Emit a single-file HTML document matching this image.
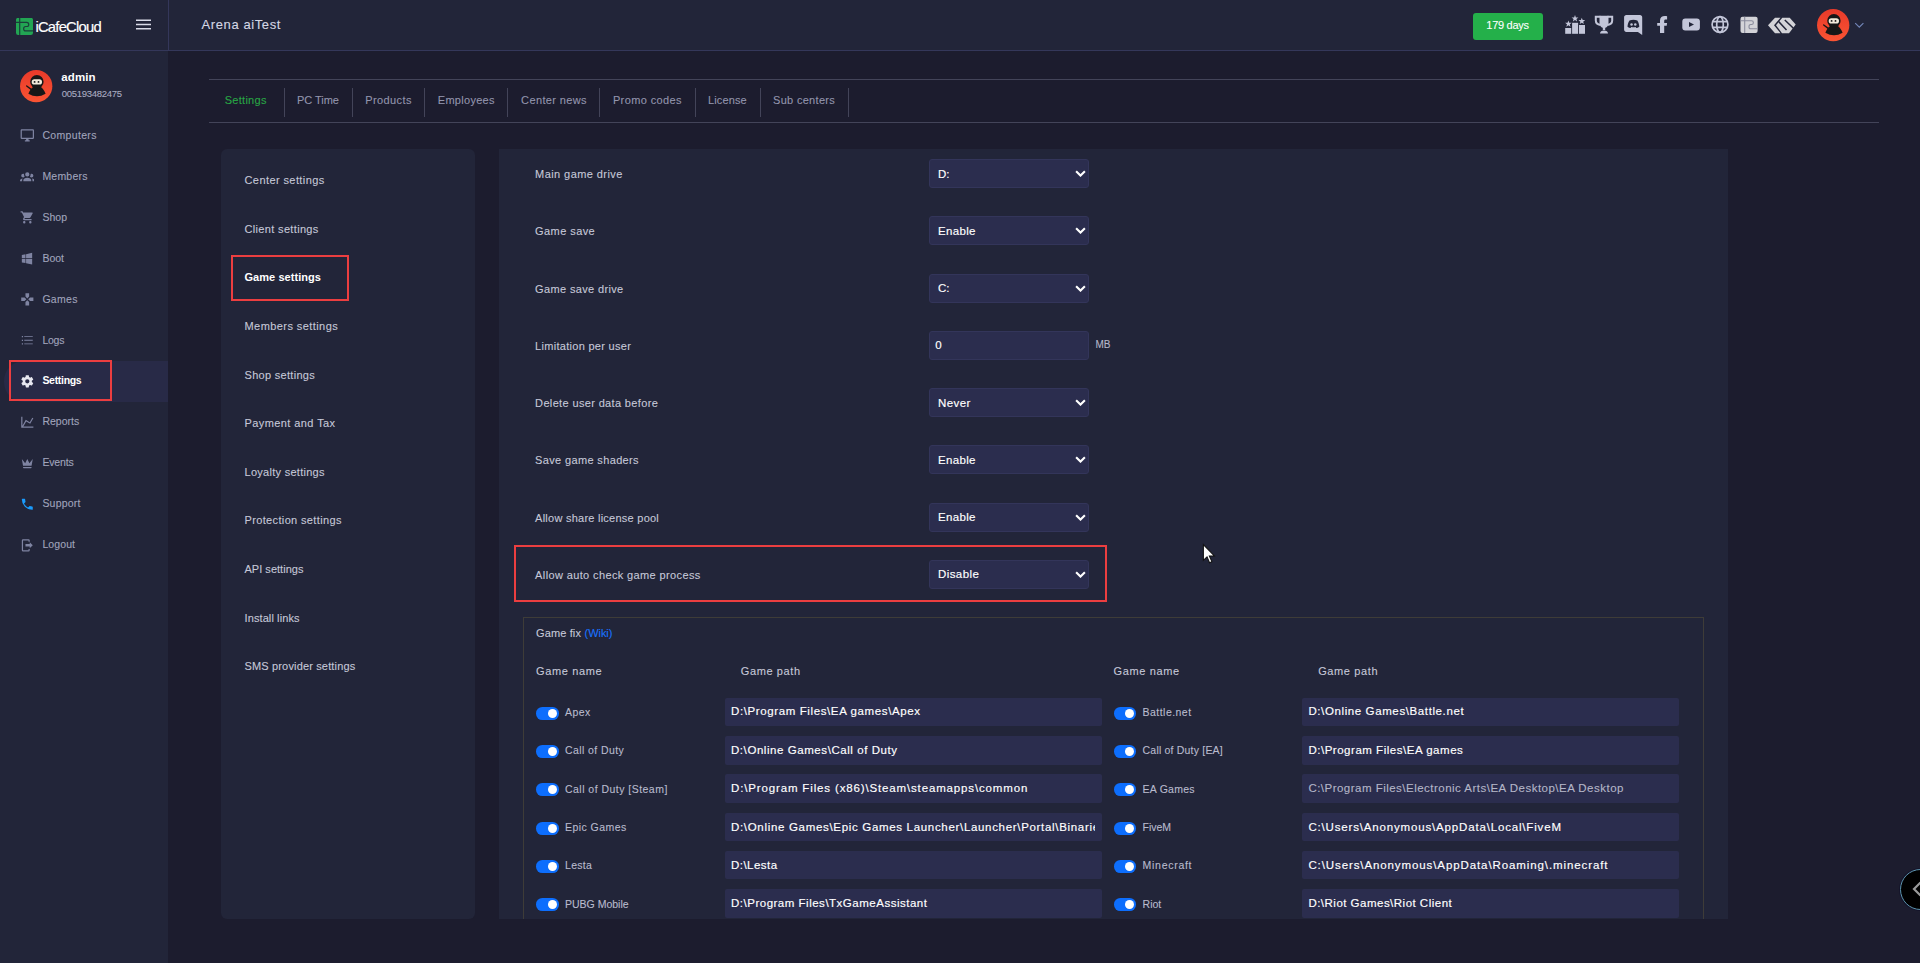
<!DOCTYPE html>
<html lang="en">
<head>
<meta charset="utf-8">
<title>iCafeCloud - Game settings</title>
<style>
*{box-sizing:border-box;margin:0;padding:0}
html,body{width:1920px;height:963px;overflow:hidden;background:#1c1c2e;font-family:"Liberation Sans",sans-serif;color:#c3c5d6;font-size:11px}
.abs{position:absolute}
.t{position:absolute;line-height:14px;white-space:pre;-webkit-text-stroke:0.1px currentColor}
.t.clip{overflow:hidden}
#topbar{position:absolute;left:0;top:0;width:1920px;height:51px;background:#222539;border-bottom:1px solid #34375a}
#topbar .vline{position:absolute;left:168px;top:0;width:1px;height:50px;background:#34375a}
#sidebar{position:absolute;left:0;top:51px;width:168px;height:912px;background:#222539}
.days{position:absolute;left:1473px;top:13px;width:70px;height:27px;background:#24b04a;border-radius:3px}
.ni{position:absolute;left:19.5px;width:14.6px;height:14.6px;fill:#7f84a2}
.ni.on{fill:#e6e7f0}
.navact{position:absolute;left:4px;width:164px;height:41px;background:#282a47;border-radius:20px 0 0 20px}
.redbox{position:absolute;border:2px solid #ec3e40}
.hline{position:absolute;left:209px;width:1670px;height:1px;background:#434459}
.vsep{position:absolute;top:87.5px;width:1px;height:29px;background:#434459}
.card{position:absolute;background:#222539;border-radius:6px}
.sel{position:absolute;left:929px;width:160px;height:29px;background:#2b2d4e;border:1px solid #33355a;border-radius:3px}
.fieldset{position:absolute;left:523px;top:617px;width:1181px;height:320px;border:1px solid #3e3c38}
.tg{position:absolute;width:23px;height:12.6px;border-radius:6.3px;background:#0d6efd}
.tg:after{content:"";position:absolute;right:2px;top:1.8px;width:9px;height:9px;border-radius:50%;background:#fff}
.gp{position:absolute;width:377px;height:28px;background:#2b2d4e;border-radius:2px}
.mask{position:absolute;left:480px;top:919px;width:1300px;height:44px;background:#1c1c2e}
.fab{position:absolute;left:1899.5px;top:868.5px;width:41px;height:41px;border-radius:50%;background:#000;border:1.2px solid #5c93ad;box-shadow:0 0 0 1px #14142a}
.fab svg{position:absolute;left:11.5px;top:11.3px}
.w{-webkit-text-stroke:0.16px currentColor}
</style>
</head>
<body>
<aside>
<div id="sidebar"></div>
<svg class="abs" style="left:20px;top:70px" width="33" height="33" viewBox="0 0 33 33"><defs><linearGradient id="avg1" x1="0" y1="0" x2="0" y2="1"><stop offset="0" stop-color="#e83a2a"/><stop offset="1" stop-color="#fa5433"/></linearGradient></defs><circle cx="16.200" cy="16.200" r="16.150" fill="url(#avg1)"/><path d="M13.800 16.500C11.500 18 9.500 20.500 8.400 23.700Q17 28.800 25.600 23.700C24.400 20.500 22.500 18 20.200 16.500Z" fill="#171717"/><circle cx="16.900" cy="11.700" r="6.700" fill="#171717"/><rect x="11.700" y="9.300" width="10.300" height="5.300" rx="2.650" fill="#f3ebdc"/><circle cx="14.600" cy="11.900" r=".95" fill="#171717"/><circle cx="18.500" cy="11.900" r=".95" fill="#171717"/><path d="M6.700 16l4.800 3.600" stroke="#171717" stroke-width="1.400" stroke-linecap="round"/></svg>
<div class="t" style="left:61.3px;top:70px;font-size:11.5px;letter-spacing:0.089px;font-weight:700;-webkit-text-stroke:0;color:#fff">admin</div>
<div class="t" style="left:61.7px;top:87px;font-size:9.5px;letter-spacing:-0.274px;color:#a9abc0">005193482475</div>
<svg class="ni " style="top:128.2px" viewBox="0 0 24 24"><path d="M21,16H3V4H21M21,2H3C1.890,2 1,2.890 1,4V16A2,2 0 0,0 3,18H10V20H8V22H16V20H14V18H21A2,2 0 0,0 23,16V4C23,2.890 22.100,2 21,2Z"/></svg>
<div class="t" style="left:42.4px;top:128px;font-size:10.5px;letter-spacing:0.331px;color:#a0a4bc">Computers</div>
<svg class="ni " style="top:169.2px" viewBox="0 0 24 24"><path d="M12,5.500A3.500,3.500 0 0,1 15.500,9A3.500,3.500 0 0,1 12,12.500A3.500,3.500 0 0,1 8.500,9A3.500,3.500 0 0,1 12,5.500M5,8C5.560,8 6.080,8.150 6.530,8.420C6.380,9.850 6.800,11.270 7.660,12.380C7.160,13.340 6.160,14 5,14A3,3 0 0,1 2,11A3,3 0 0,1 5,8M19,8A3,3 0 0,1 22,11A3,3 0 0,1 19,14C17.840,14 16.840,13.340 16.340,12.380C17.200,11.270 17.620,9.850 17.470,8.420C17.920,8.150 18.440,8 19,8M5.500,18.250C5.500,16.180 8.410,14.500 12,14.500C15.590,14.500 18.500,16.180 18.500,18.250V20H5.500V18.250M0,20V18.500C0,17.110 1.890,15.940 4.450,15.600C3.860,16.280 3.500,17.220 3.500,18.250V20H0M24,20H20.500V18.250C20.500,17.220 20.140,16.280 19.550,15.600C22.110,15.940 24,17.110 24,18.500V20Z"/></svg>
<div class="t" style="left:42.4px;top:169px;font-size:10.5px;letter-spacing:0.207px;color:#a0a4bc">Members</div>
<svg class="ni " style="top:210.2px" viewBox="0 0 24 24"><path d="M17,18C15.890,18 15,18.890 15,20A2,2 0 0,0 17,22A2,2 0 0,0 19,20C19,18.890 18.100,18 17,18M1,2V4H3L6.600,11.590L5.240,14.040C5.090,14.320 5,14.650 5,15A2,2 0 0,0 7,17H19V15H7.420A0.250,0.250 0 0,1 7.170,14.750C7.170,14.700 7.180,14.660 7.200,14.630L8.100,13H15.550C16.300,13 16.960,12.580 17.300,11.970L20.880,5.500C20.950,5.340 21,5.170 21,5A1,1 0 0,0 20,4H5.210L4.270,2M7,18C5.890,18 5,18.890 5,20A2,2 0 0,0 7,22A2,2 0 0,0 9,20C9,18.890 8.100,18 7,18Z"/></svg>
<div class="t" style="left:42.4px;top:210px;font-size:10.5px;letter-spacing:0.026px;color:#a0a4bc">Shop</div>
<svg class="ni " style="top:251.2px" viewBox="0 0 24 24"><path d="M3,12V6.750L9,5.430V11.910L3,12M20,3V11.750L10,11.900V5.210L20,3M3,13L9,13.090V19.900L3,18.750V13M20,13.250V22L10,20.090V13.100L20,13.250Z"/></svg>
<div class="t" style="left:42.4px;top:251px;font-size:10.5px;letter-spacing:0.0px;color:#a0a4bc">Boot</div>
<svg class="ni " style="top:292.2px" viewBox="0 0 24 24"><path d="M16.500,9L13.500,12L16.500,15H22V9M9,16.500V22H15V16.500L12,13.500M7.500,9H2V15H7.500L10.500,12M15,7.500V2H9V7.500L12,10.500L15,7.500Z"/></svg>
<div class="t" style="left:42.4px;top:292px;font-size:10.5px;letter-spacing:0.317px;color:#a0a4bc">Games</div>
<svg class="ni " style="top:333.2px" viewBox="0 0 24 24"><path d="M7,5.300H21V6.700H7V5.300M7,12.700V11.300H21V12.700H7M3,5H5V7H3V5M3,11H5V13H3V11M7,18.700V17.300H21V18.700H7M3,17H5V19H3V17Z"/></svg>
<div class="t" style="left:42.4px;top:333px;font-size:10.5px;letter-spacing:-0.224px;color:#a0a4bc">Logs</div>
<div class="navact" style="top:361px"></div>
<svg class="ni on" style="top:373.7px" viewBox="0 0 24 24"><path d="M12,15.500A3.500,3.500 0 0,1 8.500,12A3.500,3.500 0 0,1 12,8.500A3.500,3.500 0 0,1 15.500,12A3.500,3.500 0 0,1 12,15.500M19.430,12.970C19.470,12.650 19.500,12.330 19.500,12C19.500,11.670 19.470,11.340 19.430,11L21.540,9.370C21.730,9.220 21.780,8.950 21.660,8.730L19.660,5.270C19.540,5.050 19.270,4.960 19.050,5.050L16.560,6.050C16.040,5.660 15.500,5.320 14.870,5.070L14.500,2.420C14.460,2.180 14.250,2 14,2H10C9.750,2 9.540,2.180 9.500,2.420L9.130,5.070C8.500,5.320 7.960,5.660 7.440,6.050L4.950,5.050C4.730,4.960 4.460,5.050 4.340,5.270L2.340,8.730C2.210,8.950 2.270,9.220 2.460,9.370L4.570,11C4.530,11.340 4.500,11.670 4.500,12C4.500,12.330 4.530,12.650 4.570,12.970L2.460,14.630C2.270,14.780 2.210,15.050 2.340,15.270L4.340,18.730C4.460,18.950 4.730,19.030 4.950,18.950L7.440,17.940C7.960,18.340 8.500,18.680 9.130,18.930L9.500,21.580C9.540,21.820 9.750,22 10,22H14C14.250,22 14.460,21.820 14.500,21.580L14.870,18.930C15.500,18.670 16.040,18.340 16.560,17.940L19.050,18.950C19.270,19.030 19.540,18.950 19.660,18.730L21.660,15.270C21.780,15.050 21.730,14.780 21.540,14.630L19.430,12.970Z"/></svg>
<div class="t" style="left:42.4px;top:373px;font-size:10.5px;letter-spacing:-0.302px;font-weight:700;-webkit-text-stroke:0;color:#fff">Settings</div>
<svg class="ni " style="top:414.7px" viewBox="0 0 24 24"><path d="M16,11.780L20.240,4.450L21.970,5.450L16.740,14.500L10.230,10.750L5.460,19H22V21H2V3H4V17.540L9.500,8L16,11.780Z"/></svg>
<div class="t" style="left:42.4px;top:414px;font-size:10.5px;letter-spacing:0.007px;color:#a0a4bc">Reports</div>
<svg class="ni " style="top:455.7px" viewBox="0 0 24 24"><path d="M5,16L3,5L8.500,12L12,5L15.500,12L21,5L19,16H5M19,19A1,1 0 0,1 18,20H6A1,1 0 0,1 5,19V18H19V19Z"/></svg>
<div class="t" style="left:42.4px;top:455px;font-size:10.5px;letter-spacing:-0.16px;color:#a0a4bc">Events</div>
<svg class="ni " style="top:496.7px;fill:#1a9bfc" viewBox="0 0 24 24"><path d="M6.620,10.790C8.060,13.620 10.380,15.940 13.210,17.380L15.410,15.180C15.690,14.900 16.080,14.820 16.430,14.930C17.550,15.300 18.750,15.500 20,15.500A1,1 0 0,1 21,16.500V20A1,1 0 0,1 20,21A17,17 0 0,1 3,4A1,1 0 0,1 4,3H7.500A1,1 0 0,1 8.500,4C8.500,5.250 8.700,6.450 9.070,7.570C9.180,7.920 9.100,8.310 8.820,8.590L6.620,10.790Z"/></svg>
<div class="t" style="left:42.4px;top:496px;font-size:10.5px;letter-spacing:0.205px;color:#a0a4bc">Support</div>
<svg class="ni " style="top:537.7px" viewBox="0 0 24 24"><path d="M16,17V14H9V10H16V7L21,12L16,17M14,2A2,2 0 0,1 16,4V6H14V4H5V20H14V18H16V20A2,2 0 0,1 14,22H5A2,2 0 0,1 3,20V4A2,2 0 0,1 5,2H14Z"/></svg>
<div class="t" style="left:42.4px;top:537px;font-size:10.5px;letter-spacing:0.097px;color:#a0a4bc">Logout</div>
<div class="redbox" style="left:9px;top:360px;width:103px;height:41px"></div>
</aside>
<header id="topbar">
<div class="vline"></div>
<svg class="abs" style="left:16px;top:18px" width="17" height="17" viewBox="0 0 17 17"><rect x="0" y="-0.200" width="17" height="17.200" rx="2.200" fill="#22a553"/><path d="M3.700 0V17M0 4.300H10.800c2.600 0 2.600 4.200 0 4.200H9.600c-2.600 0-2.600 4.400 0 4.400H17" fill="none" stroke="#1b3f3a" stroke-width="1.200"/></svg>
<div class="t w" style="left:35.4px;top:20px;font-size:14.8px;letter-spacing:-0.769px;color:#fff">iCafeCloud</div>
<svg class="abs" style="left:136px;top:19px" width="15" height="11" viewBox="0 0 15 11"><path d="M0 1.200h15M0 5.500h15M0 9.800h15" stroke="#d9dbe8" stroke-width="1.500"/></svg>
<div class="t" style="left:201.6px;top:18px;font-size:13px;letter-spacing:0.59px;color:#d5d7e4">Arena aiTest</div>
<div class="days"></div>
<div class="t" style="left:1486.3px;top:18px;font-size:11px;letter-spacing:-0.277px;color:#fff">179 days</div>
<svg class="abs" style="left:1560px;top:10px" width="30" height="30" viewBox="1560 10 30 30" fill="#c3c6d9"><rect x="1565.200" y="28" width="6" height="5.800"/><rect x="1572.100" y="22.800" width="6" height="11"/><rect x="1579" y="25" width="6" height="8.800"/><polygon points="1568.40,20.40 1569.26,22.71 1571.73,22.82 1569.80,24.35 1570.46,26.73 1568.40,25.37 1566.34,26.73 1567.00,24.35 1565.07,22.82 1567.54,22.71"/><polygon points="1575.00,15.00 1575.89,17.38 1578.42,17.49 1576.44,19.07 1577.12,21.51 1575.00,20.11 1572.88,21.51 1573.56,19.07 1571.58,17.49 1574.11,17.38"/><polygon points="1581.80,17.70 1582.66,20.01 1585.13,20.12 1583.20,21.65 1583.86,24.03 1581.80,22.67 1579.74,24.03 1580.40,21.65 1578.47,20.12 1580.94,20.01"/></svg>
<svg class="abs" style="left:1590px;top:10px" width="30" height="30" viewBox="1590 10 30 30" fill="#c3c6d9"><path d="M1599.500 15.800h9v7.200c0 2.800-1.900 5-4.500 5s-4.500-2.200-4.500-5z"/><path d="M1600.500 16.800H1595.800v3.800c0 2.400 1.900 4 4.700 4.400M1607.500 16.800h4.700v3.800c0 2.400-1.900 4-4.700 4.400" fill="none" stroke="#c3c6d9" stroke-width="2"/><path d="M1602.800 27h2.400v3h-2.400z"/><path d="M1600 33.500c0-1.800 1.600-3 4-3s4 1.200 4 3z"/></svg>
<svg class="abs" style="left:1620px;top:10px" width="30" height="30" viewBox="1620 10 30 30"><path d="M1626.300 15h13.700c1.200 0 2.200 1 2.200 2.200V35l-4.300-3h-11.600c-1.200 0-2.200-1-2.200-2.200V17.200c0-1.200 1-2.200 2.200-2.200z" fill="#c3c6d9"/><path d="M1629.500 20.600c1.200-.6 2.600-.9 3.900-.9s2.700.3 3.900.9c1.100 1.700 1.900 3.800 2 6.100-1 .8-2.100 1.200-3.100 1.300l-.6-1.100c-1.400.4-3 .4-4.400 0l-.6 1.100c-1-.1-2.100-.5-3.100-1.300.1-2.300.9-4.400 2-6.100z" fill="#222539"/><circle cx="1631.500" cy="24.500" r="1.250" fill="#c3c6d9"/><circle cx="1635.300" cy="24.500" r="1.250" fill="#c3c6d9"/></svg>
<svg class="abs" style="left:1650px;top:10px" width="30" height="30" viewBox="1650 10 30 30"><path d="M1664.200 33.100V25.800h2.500l.4-2.800h-2.900v-1.900c0-.9.300-1.600 1.500-1.600h1.400v-3.300c-.3 0-1.200-.2-2.300-.2-2.700 0-4.800 1.500-4.800 4.400v2.600h-2.800v2.800h2.800v7.300z" fill="#c3c6d9"/></svg>
<svg class="abs" style="left:1680px;top:10px" width="30" height="30" viewBox="1680 10 30 30"><rect x="1682.300" y="18.500" width="17.600" height="12" rx="3" fill="#c3c6d9"/><path d="M1689 22l5 2.500-5 2.500z" fill="#222539"/></svg>
<svg class="abs" style="left:1705px;top:10px" width="30" height="30" viewBox="1705 10 30 30" fill="none" stroke="#c3c6d9" stroke-width="1.700"><circle cx="1720" cy="24.550" r="7.900"/><ellipse cx="1720" cy="24.550" rx="3.300" ry="7.900"/><path d="M1712.800 21.700h14.400M1712.800 27.400h14.400"/></svg>
<svg class="abs" style="left:1735px;top:10px" width="30" height="30" viewBox="1735 10 30 30"><rect x="1740.500" y="16.700" width="17.100" height="16.300" rx="2" fill="#d3d3d8"/><path d="M1744.700 16.700V33M1740.500 20.800H1751.500c2.500 0 2.500 3.700 0 3.700h-0.800c-2.300 0-2.300 4.300 0 4.300h6.900" fill="none" stroke="#8a8c9d" stroke-width="1.100"/></svg>
<svg class="abs" style="left:1765px;top:10px" width="35" height="30" viewBox="1765 10 35 30"><polygon points="1768,25.200 1775,17.700 1780.500,17.700 1774,25.200 1780.500,33.200 1775,33.200" fill="#d3d3d8"/><polygon points="1776,25.200 1782.300,17.700 1789.700,17.700 1795.700,24.500 1789,33.200 1782,33.200" fill="#d3d3d8"/><path d="M1778.400 21.300L1786.500 29.900M1784.800 20L1793.400 28.200" stroke="#222539" stroke-width="1.500"/></svg>
<svg class="abs" style="left:1817px;top:9px" width="33" height="33" viewBox="0 0 33 33"><defs><linearGradient id="avg2" x1="0" y1="0" x2="0" y2="1"><stop offset="0" stop-color="#e83a2a"/><stop offset="1" stop-color="#fa5433"/></linearGradient></defs><circle cx="16.200" cy="16.200" r="16.150" fill="url(#avg2)"/><path d="M13.800 16.500C11.500 18 9.500 20.500 8.400 23.700Q17 28.800 25.600 23.700C24.400 20.500 22.500 18 20.200 16.500Z" fill="#171717"/><circle cx="16.900" cy="11.700" r="6.700" fill="#171717"/><rect x="11.700" y="9.300" width="10.300" height="5.300" rx="2.650" fill="#f3ebdc"/><circle cx="14.600" cy="11.900" r=".95" fill="#171717"/><circle cx="18.500" cy="11.900" r=".95" fill="#171717"/><path d="M6.700 16l4.800 3.600" stroke="#171717" stroke-width="1.400" stroke-linecap="round"/></svg>
<svg class="abs" style="left:1854px;top:21px" width="11" height="8" viewBox="0 0 11 8"><path d="M1.200 2.200L5.300 6.200l4.100-4" fill="none" stroke="#7386b8" stroke-width="1.150"/></svg>
</header>
<main>
<div class="hline" style="top:79px"></div>
<div class="hline" style="top:122px"></div>
<div class="t" style="left:224.7px;top:93px;font-size:11px;letter-spacing:0.281px;color:#28a745">Settings</div>
<div class="vsep" style="left:284px"></div>
<div class="t" style="left:297.1px;top:93px;font-size:11px;letter-spacing:-0.061px;color:#9395ad">PC Time</div>
<div class="vsep" style="left:352px"></div>
<div class="t" style="left:365.3px;top:93px;font-size:11px;letter-spacing:0.385px;color:#9395ad">Products</div>
<div class="vsep" style="left:424px"></div>
<div class="t" style="left:437.8px;top:93px;font-size:11px;letter-spacing:0.287px;color:#9395ad">Employees</div>
<div class="vsep" style="left:507px"></div>
<div class="t" style="left:521.1px;top:93px;font-size:11px;letter-spacing:0.375px;color:#9395ad">Center news</div>
<div class="vsep" style="left:599px"></div>
<div class="t" style="left:612.9px;top:93px;font-size:11px;letter-spacing:0.391px;color:#9395ad">Promo codes</div>
<div class="vsep" style="left:695px"></div>
<div class="t" style="left:708.1px;top:93px;font-size:11px;letter-spacing:0.1px;color:#9395ad">License</div>
<div class="vsep" style="left:760px"></div>
<div class="t" style="left:773.0px;top:93px;font-size:11px;letter-spacing:0.312px;color:#9395ad">Sub centers</div>
<div class="vsep" style="left:848px"></div>
<div class="card" style="left:221px;top:149px;width:254px;height:770px"></div>
<div class="t" style="left:244.5px;top:173px;font-size:11px;letter-spacing:0.41px;color:#c6c8d8">Center settings</div>
<div class="t" style="left:244.5px;top:222px;font-size:11px;letter-spacing:0.338px;color:#c6c8d8">Client settings</div>
<div class="t" style="left:244.5px;top:270px;font-size:11px;letter-spacing:0.051px;font-weight:700;-webkit-text-stroke:0;color:#fff">Game settings</div>
<div class="t" style="left:244.5px;top:319px;font-size:11px;letter-spacing:0.427px;color:#c6c8d8">Members settings</div>
<div class="t" style="left:244.5px;top:368px;font-size:11px;letter-spacing:0.297px;color:#c6c8d8">Shop settings</div>
<div class="t" style="left:244.5px;top:416px;font-size:11px;letter-spacing:0.416px;color:#c6c8d8">Payment and Tax</div>
<div class="t" style="left:244.5px;top:465px;font-size:11px;letter-spacing:0.279px;color:#c6c8d8">Loyalty settings</div>
<div class="t" style="left:244.5px;top:513px;font-size:11px;letter-spacing:0.357px;color:#c6c8d8">Protection settings</div>
<div class="t" style="left:244.5px;top:562px;font-size:11px;letter-spacing:0.02px;color:#c6c8d8">API settings</div>
<div class="t" style="left:244.5px;top:611px;font-size:11px;letter-spacing:0.102px;color:#c6c8d8">Install links</div>
<div class="t" style="left:244.5px;top:659px;font-size:11px;letter-spacing:0.156px;color:#c6c8d8">SMS provider settings</div>
<div class="redbox" style="left:231px;top:255px;width:118px;height:45.500px"></div>
<div class="card" style="left:499px;top:149px;width:1229px;height:770px;border-radius:0"></div>
<div class="t" style="left:535.1px;top:167px;font-size:11px;letter-spacing:0.421px;color:#c6c8d8">Main game drive</div>
<div class="sel" style="top:159.2px"></div><div class="t w" style="left:938.0px;top:167px;font-size:11.5px;letter-spacing:0px;color:#fff">D:</div>
<svg class="abs" style="left:1074.5px;top:169.7px" width="11" height="7.700" viewBox="0 0 10 7"><path d="M1 1.200L5 5.100l4-3.900" fill="none" stroke="#fff" stroke-width="1.900"/></svg>
<div class="t" style="left:535.1px;top:224px;font-size:11px;letter-spacing:0.421px;color:#c6c8d8">Game save</div>
<div class="sel" style="top:216.3px"></div><div class="t w" style="left:938.0px;top:224px;font-size:11.5px;letter-spacing:0.323px;color:#fff">Enable</div>
<svg class="abs" style="left:1074.5px;top:226.7px" width="11" height="7.700" viewBox="0 0 10 7"><path d="M1 1.200L5 5.100l4-3.900" fill="none" stroke="#fff" stroke-width="1.900"/></svg>
<div class="t" style="left:535.1px;top:282px;font-size:11px;letter-spacing:0.355px;color:#c6c8d8">Game save drive</div>
<div class="sel" style="top:274.2px"></div><div class="t w" style="left:938.0px;top:281px;font-size:11.5px;letter-spacing:0px;color:#fff">C:</div>
<svg class="abs" style="left:1074.5px;top:284.7px" width="11" height="7.700" viewBox="0 0 10 7"><path d="M1 1.200L5 5.100l4-3.900" fill="none" stroke="#fff" stroke-width="1.900"/></svg>
<div class="t" style="left:535.1px;top:339px;font-size:11px;letter-spacing:0.29px;color:#c6c8d8">Limitation per user</div>
<div class="sel" style="top:330.9px"></div><div class="t w" style="left:935.2px;top:338px;font-size:11.5px;letter-spacing:0px;color:#fff">0</div>
<div class="t" style="left:1095.5px;top:338px;font-size:10px;letter-spacing:0px;color:#b4b6c8">MB</div>
<div class="t" style="left:535.1px;top:396px;font-size:11px;letter-spacing:0.352px;color:#c6c8d8">Delete user data before</div>
<div class="sel" style="top:387.9px"></div><div class="t w" style="left:938.0px;top:396px;font-size:11.5px;letter-spacing:0.436px;color:#fff">Never</div>
<svg class="abs" style="left:1074.5px;top:398.7px" width="11" height="7.700" viewBox="0 0 10 7"><path d="M1 1.200L5 5.100l4-3.900" fill="none" stroke="#fff" stroke-width="1.900"/></svg>
<div class="t" style="left:535.1px;top:453px;font-size:11px;letter-spacing:0.355px;color:#c6c8d8">Save game shaders</div>
<div class="sel" style="top:444.9px"></div><div class="t w" style="left:938.0px;top:453px;font-size:11.5px;letter-spacing:0.323px;color:#fff">Enable</div>
<svg class="abs" style="left:1074.5px;top:455.7px" width="11" height="7.700" viewBox="0 0 10 7"><path d="M1 1.200L5 5.100l4-3.900" fill="none" stroke="#fff" stroke-width="1.900"/></svg>
<div class="t" style="left:535.1px;top:511px;font-size:11px;letter-spacing:0.248px;color:#c6c8d8">Allow share license pool</div>
<div class="sel" style="top:503.2px"></div><div class="t w" style="left:938.0px;top:510px;font-size:11.5px;letter-spacing:0.323px;color:#fff">Enable</div>
<svg class="abs" style="left:1074.5px;top:513.7px" width="11" height="7.700" viewBox="0 0 10 7"><path d="M1 1.200L5 5.100l4-3.900" fill="none" stroke="#fff" stroke-width="1.900"/></svg>
<div class="t" style="left:535.1px;top:568px;font-size:11px;letter-spacing:0.376px;color:#c6c8d8">Allow auto check game process</div>
<div class="sel" style="top:559.9px"></div><div class="t w" style="left:938.0px;top:567px;font-size:11.5px;letter-spacing:0.412px;color:#fff">Disable</div>
<svg class="abs" style="left:1074.5px;top:570.7px" width="11" height="7.700" viewBox="0 0 10 7"><path d="M1 1.200L5 5.100l4-3.900" fill="none" stroke="#fff" stroke-width="1.900"/></svg>
<div class="redbox" style="left:514.3px;top:544.5px;width:592.7px;height:57px"></div>
<div class="fieldset"></div>
<div class="t" style="left:536.1px;top:626px;font-size:11px;letter-spacing:0.115px;color:#c6c8d8">Game fix</div>
<div class="t" style="left:584.6px;top:626px;font-size:11px;letter-spacing:-0.058px;color:#1a73ff">(Wiki)</div>
<div class="t" style="left:536.1px;top:664px;font-size:11px;letter-spacing:0.636px;color:#c6c8d8">Game name</div>
<div class="t" style="left:740.8px;top:664px;font-size:11px;letter-spacing:0.612px;color:#c6c8d8">Game path</div>
<div class="t" style="left:1113.6px;top:664px;font-size:11px;letter-spacing:0.636px;color:#c6c8d8">Game name</div>
<div class="t" style="left:1318.2px;top:664px;font-size:11px;letter-spacing:0.612px;color:#c6c8d8">Game path</div>
<div class="tg" style="left:536px;top:707.3px"></div><div class="t" style="left:565.0px;top:705px;font-size:10.5px;letter-spacing:0.424px;color:#b9bbcd">Apex</div>
<div class="gp" style="left:725px;top:698px;height:28px"></div><div class="t w" style="left:731.0px;top:704px;font-size:11.5px;letter-spacing:0.611px;color:#fff">D:\Program Files\EA games\Apex</div>
<div class="tg" style="left:1114px;top:707.3px;width:22px"></div><div class="t" style="left:1142.6px;top:705px;font-size:10.5px;letter-spacing:0.459px;color:#b9bbcd">Battle.net</div>
<div class="gp" style="left:1302px;top:698px;height:28px"></div><div class="t w" style="left:1308.4px;top:704px;font-size:11.5px;letter-spacing:0.61px;color:#fff">D:\Online Games\Battle.net</div>
<div class="tg" style="left:536px;top:745.3px"></div><div class="t" style="left:565.0px;top:743px;font-size:10.5px;letter-spacing:0.412px;color:#b9bbcd">Call of Duty</div>
<div class="gp" style="left:725px;top:736px;height:29px"></div><div class="t w" style="left:731.0px;top:743px;font-size:11.5px;letter-spacing:0.562px;color:#fff">D:\Online Games\Call of Duty</div>
<div class="tg" style="left:1114px;top:745.3px;width:22px"></div><div class="t" style="left:1142.6px;top:743px;font-size:10.5px;letter-spacing:0.192px;color:#b9bbcd">Call of Duty [EA]</div>
<div class="gp" style="left:1302px;top:736px;height:29px"></div><div class="t w" style="left:1308.4px;top:743px;font-size:11.5px;letter-spacing:0.522px;color:#fff">D:\Program Files\EA games</div>
<div class="tg" style="left:536px;top:783.3px"></div><div class="t" style="left:565.0px;top:782px;font-size:10.5px;letter-spacing:0.47px;color:#b9bbcd">Call of Duty [Steam]</div>
<div class="gp" style="left:725px;top:774px;height:29px"></div><div class="t w" style="left:731.0px;top:781px;font-size:11.5px;letter-spacing:0.852px;color:#fff">D:\Program Files (x86)\Steam\steamapps\common</div>
<div class="tg" style="left:1114px;top:783.3px;width:22px"></div><div class="t" style="left:1142.6px;top:782px;font-size:10.5px;letter-spacing:0.244px;color:#b9bbcd">EA Games</div>
<div class="gp" style="left:1302px;top:774px;height:29px"></div><div class="t" style="left:1308.4px;top:781px;font-size:11.5px;letter-spacing:0.481px;color:#b4b6c8">C:\Program Files\Electronic Arts\EA Desktop\EA Desktop</div>
<div class="tg" style="left:536px;top:822.3px"></div><div class="t" style="left:565.0px;top:820px;font-size:10.5px;letter-spacing:0.447px;color:#b9bbcd">Epic Games</div>
<div class="gp" style="left:725px;top:813px;height:28px"></div><div class="t clip w" style="left:731.0px;top:820px;font-size:11.5px;letter-spacing:0.681px;color:#fff;width:364.3px">D:\Online Games\Epic Games Launcher\Launcher\Portal\Binaries\Win64</div>
<div class="tg" style="left:1114px;top:822.3px;width:22px"></div><div class="t" style="left:1142.6px;top:820px;font-size:10.5px;letter-spacing:-0.046px;color:#b9bbcd">FiveM</div>
<div class="gp" style="left:1302px;top:813px;height:28px"></div><div class="t w" style="left:1308.4px;top:820px;font-size:11.5px;letter-spacing:0.833px;color:#fff">C:\Users\Anonymous\AppData\Local\FiveM</div>
<div class="tg" style="left:536px;top:860.3px"></div><div class="t" style="left:565.0px;top:858px;font-size:10.5px;letter-spacing:0.306px;color:#b9bbcd">Lesta</div>
<div class="gp" style="left:725px;top:851px;height:28px"></div><div class="t w" style="left:731.0px;top:858px;font-size:11.5px;letter-spacing:0.472px;color:#fff">D:\Lesta</div>
<div class="tg" style="left:1114px;top:860.3px;width:22px"></div><div class="t" style="left:1142.6px;top:858px;font-size:10.5px;letter-spacing:0.715px;color:#b9bbcd">Minecraft</div>
<div class="gp" style="left:1302px;top:851px;height:28px"></div><div class="t w" style="left:1308.4px;top:858px;font-size:11.5px;letter-spacing:0.9px;color:#fff">C:\Users\Anonymous\AppData\Roaming\.minecraft</div>
<div class="tg" style="left:536px;top:898.3px"></div><div class="t" style="left:565.0px;top:897px;font-size:10.5px;letter-spacing:0.0px;color:#b9bbcd">PUBG Mobile</div>
<div class="gp" style="left:725px;top:889px;height:29px"></div><div class="t w" style="left:731.0px;top:896px;font-size:11.5px;letter-spacing:0.507px;color:#fff">D:\Program Files\TxGameAssistant</div>
<div class="tg" style="left:1114px;top:898.3px;width:22px"></div><div class="t" style="left:1142.6px;top:897px;font-size:10.5px;letter-spacing:-0.026px;color:#b9bbcd">Riot</div>
<div class="gp" style="left:1302px;top:889px;height:29px"></div><div class="t w" style="left:1308.4px;top:896px;font-size:11.5px;letter-spacing:0.486px;color:#fff">D:\Riot Games\Riot Client</div>
</main>
<div class="mask"></div>
<svg class="abs" style="left:1202.300px;top:542.800px" width="14.700" height="22" viewBox="0 0 14 21"><path d="M1.300 1.500v15l3.500-3.300 2.400 5.600 2.200-1-2.400-5.400h4.800z" fill="#fff" stroke="#111" stroke-width="1"/></svg>
<div class="fab"><svg viewBox="0 0 10 16" width="10" height="16"><path d="M8.500 1.500L2 8l6.500 6.500" fill="none" stroke="#9a9a9a" stroke-width="2.200"/></svg></div>
</body>
</html>
